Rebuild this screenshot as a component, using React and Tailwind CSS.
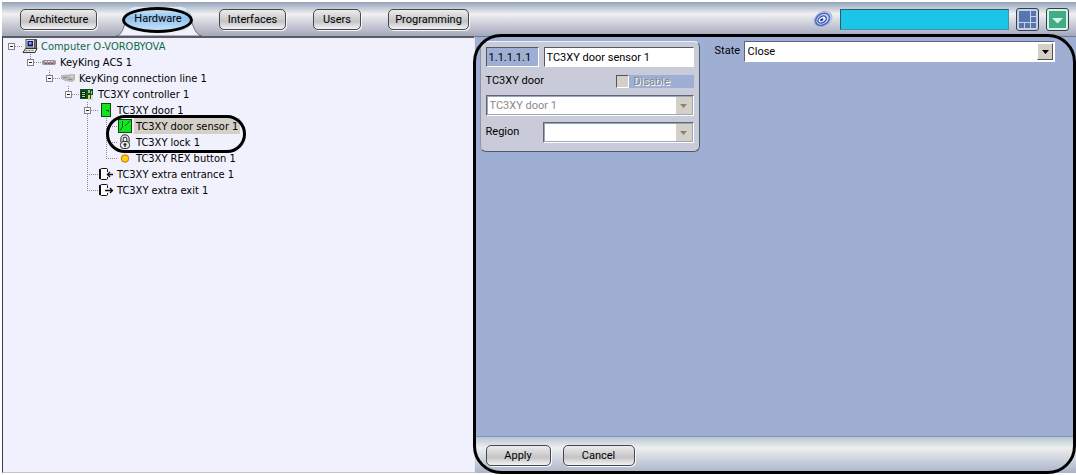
import { useState } from 'react'

const TABS = [
  { name: 'Architecture', width: 'w-[77px]' },
  { name: 'Hardware', width: 'w-[68px]' },
  { name: 'Interfaces', width: 'w-[67px]' },
  { name: 'Users', width: 'w-[48px]' },
  { name: 'Programming', width: 'w-[81px]' },
]

// branch: one character per indent cell
// r = root box, b = box with line above, B = box with lines above and below,
// v = vertical, t = tee, l = last child
const TREE = [
  { branch: 'r', icon: 'computer', label: 'Computer O-VOROBYOVA' },
  { branch: ' b', icon: 'acs', label: 'KeyKing ACS 1' },
  { branch: '  b', icon: 'line', label: 'KeyKing connection line 1' },
  { branch: '   b', icon: 'controller', label: 'TC3XY controller 1' },
  { branch: '    B', icon: 'door', label: 'TC3XY door 1' },
  { branch: '    vt', icon: 'sensor', label: 'TC3XY door sensor 1' },
  { branch: '    vt', icon: 'lock', label: 'TC3XY lock 1' },
  { branch: '    vl', icon: 'rex', label: 'TC3XY REX button 1' },
  { branch: '    t', icon: 'entrance', label: 'TC3XY extra entrance 1' },
  { branch: '    l', icon: 'exit', label: 'TC3XY extra exit 1' },
]

function Branch({ kind }) {
  const box = 'rbB'.includes(kind)
  const up = 'bBvtl'.includes(kind)
  const down = 'Bvt'.includes(kind)
  return (
    <svg width="19" height="16" className="shrink-0" shapeRendering="crispEdges" aria-hidden="true">
      {kind !== ' ' && (
        <g stroke="#8a8a92" strokeDasharray="1 1" fill="none">
          {up && <path d="M8.5 0V8" />}
          {down && <path d="M8.5 8V16" />}
          {kind !== 'v' && <path d="M8 8.5H19" />}
        </g>
      )}
      {box && (
        <g>
          <rect x="5.5" y="5.5" width="6" height="6" fill="#f8f8fd" stroke="#848488" />
          <path d="M7 8.5H10" stroke="#222" />
        </g>
      )}
    </svg>
  )
}

function NodeIcon({ name }) {
  return (
    <svg width="16" height="16" viewBox="0 0 16 16" className="shrink-0" aria-hidden="true">
      {name === 'computer' && (
        <g>
          <path d="M12 2L14.500 1.500V10L12 11Z" fill="#777" stroke="#333" />
          <rect x="4" y="1.500" width="8.500" height="8.500" fill="#d9d9cf" stroke="#555" />
          <path d="M5.500 3H11V8.500H5.500Z" fill="#14147e" />
          <path d="M7 4H9.500V6.500H7Z" fill="#8ca4ee" />
          <path d="M3.500 10.500H15L13 14.500H1Z" fill="#e4e4da" stroke="#333" />
          <path d="M3.500 12.500H12.500" stroke="#8b8b86" strokeDasharray="2 1" />
        </g>
      )}
      {name === 'acs' && (
        <g>
          <rect x="1" y="6" width="14" height="5" rx="2" fill="#97919a" />
          <path d="M4 7.500H13" stroke="#e6d9e2" strokeDasharray="2 1" />
          <path d="M4 9.500H13" stroke="#a5406f" strokeDasharray="2 1" />
        </g>
      )}
      {name === 'line' && (
        <g>
          <path d="M1 5L15 4V10L12 12L5 11L1 9Z" fill="#b9b9bb" />
          <path d="M3 7.500H7M8 9.500H12" stroke="#8d8d90" />
          <path d="M11 6.500H13" stroke="#eee" />
        </g>
      )}
      {name === 'controller' && (
        <g shapeRendering="crispEdges">
          <rect x="1" y="3" width="13" height="10" fill="#17501f" />
          <path d="M2 5H7V12H2Z" fill="#0a2a10" />
          <path d="M3 6.500H6M3 8.500H6M3 10.500H6" stroke="#a9d7a2" />
          <path d="M9 4H11V7H9ZM12 5H13V8H12Z" fill="#8fd08a" />
          <path d="M9 9H11V14H9Z" fill="#e0d36b" />
          <path d="M12 9H14V15H12Z" fill="#d9e6d5" />
        </g>
      )}
      {name === 'door' && (
        <g shapeRendering="crispEdges">
          <rect x="3.500" y="1.500" width="9" height="13" fill="#0fe61c" stroke="#16421a" />
          <path d="M8 8.500H11M10.500 8V10" stroke="#14501a" />
        </g>
      )}
      {name === 'sensor' && (
        <g>
          <rect x="1.500" y="1.500" width="13" height="13" fill="#0fe61c" stroke="#16421a" />
          <path d="M5.500 3V9L3 12.500M8 8L13.500 2.500" stroke="#145a1a" fill="none" />
        </g>
      )}
      {name === 'lock' && (
        <g>
          <path d="M5 8V5a3 3 0 0 1 6 0V8" fill="none" stroke="#333" strokeWidth="3.400" />
          <path d="M5 8V5a3 3 0 0 1 6 0V8" fill="none" stroke="#ddd" strokeWidth="1.400" />
          <rect x="3.500" y="7.500" width="9" height="7" rx="3" fill="#e8e8e8" stroke="#222" />
          <path d="M8 9V13M6.500 10.500H9.500" stroke="#222" strokeWidth="1.300" />
        </g>
      )}
      {name === 'rex' && <circle cx="8" cy="8.500" r="3.700" fill="#ffd60a" stroke="#d0661a" />}
      {(name === 'entrance' || name === 'exit') && (
        <g fill="none" stroke="#111">
          <rect x="2.500" y="2.500" width="7" height="11" rx="1" fill="#fff" />
          <path d="M2 3V13" strokeWidth="2" />
          <path d="M9.500 6V11" stroke="#f1f1fd" strokeWidth="2" />
          {name === 'entrance' ? (
            <path d="M15 8.500H9M12 6L9.500 8.500L12 11" strokeWidth="1.300" />
          ) : (
            <path d="M7 8.500H14M12 6L14.500 8.500L12 11" strokeWidth="1.300" />
          )}
        </g>
      )}
    </svg>
  )
}

function SilverButton({ className, children, ...props }) {
  return (
    <button
      type="button"
      className={`h-[21px] shrink-0 rounded-[5px] border border-[#45484f] bg-linear-to-b from-[#ececec] via-[#c4c4c6] via-60% to-[#f2f2f2] text-center leading-[19px] shadow-[1px_1px_0_#f7f7f7] ${className}`}
      {...props}
    >
      {children}
    </button>
  )
}

function Combo({ id, value, onChange, options, disabled, className = '' }) {
  return (
    <div className={`relative h-[21px] border border-t-[#5d6578] border-l-[#5d6578] border-r-white border-b-white bg-white ${className}`}>
      <select
        id={id}
        value={value}
        onChange={onChange}
        disabled={disabled}
        className={`block h-full w-full appearance-none border bg-white pr-5 pl-[2px] leading-[17px] opacity-100 outline-none ${disabled ? 'border-[#9aa8bd] text-[#8a8a8a]' : 'border-white text-black'}`}
      >
        {options.map(o => <option key={o}>{o}</option>)}
      </select>
      <span
        className={`pointer-events-none absolute top-[1px] right-[1px] bottom-[1px] flex w-4 items-center justify-center bg-[#d4d0c8] ${disabled ? '' : 'border border-t-white border-l-white border-r-[#55534f] border-b-[#55534f]'}`}
      >
        <svg width="7" height="4" viewBox="0 0 7 4" aria-hidden="true">
          <path d="M0 0H7L3.500 4Z" fill={disabled ? '#85837d' : '#000'} />
        </svg>
      </span>
    </div>
  )
}

function TopBar({ tab, onSelect }) {
  return (
    <header className="flex h-[34px] shrink-0 items-center bg-linear-to-b from-[#94a3ba] via-[#f0f0f1] via-35% to-[#a3a8bb] pr-[7px] pl-[18px]">
      <nav className="flex items-center gap-[27px] self-stretch">
        {TABS.map(t => t.name === tab ? (
          <div key={t.name} className="relative flex h-full items-center">
            <svg className="absolute -left-[8px] bottom-0" width="86" height="29" viewBox="0 0 86 29" aria-hidden="true">
              <path d="M0 29C12 27 6 1.500 22 1.500H62C78 1.500 74 27 86 29Z" fill="#f1f1fb" stroke="#6a6d76" />
            </svg>
            <button type="button" className={`relative h-[24px] rounded-full bg-linear-to-b from-[#e5f1fb] via-[#8fc0ec] via-45% to-[#c9e4fa] leading-[18px] ${t.width}`}>
              {t.name}
            </button>
            <span className="pointer-events-none absolute -left-[2px] top-[5px] h-[26px] w-[71px] rounded-[50%] border-3 border-black" />
          </div>
        ) : (
          <SilverButton key={t.name} className={t.width} onClick={() => onSelect(t.name)}>{t.name}</SilverButton>
        ))}
      </nav>
      <div className="ml-auto flex items-center">
        <svg width="20" height="20" viewBox="0 0 20 20" fill="none" aria-hidden="true">
          <g transform="rotate(-32 10 10)">
            <ellipse cx="10" cy="10" rx="9.500" ry="7" fill="#c9d3f2" stroke="#a5b2e2" />
            <ellipse cx="9.500" cy="10" rx="7.500" ry="5.500" stroke="#4a64b8" strokeWidth="1.500" />
            <ellipse cx="9" cy="10" rx="4.500" ry="3" fill="#f3f5ff" stroke="#3956b4" strokeWidth="1.400" />
            <ellipse cx="8.500" cy="10" rx="1.800" ry="1.200" fill="#1e3689" />
          </g>
        </svg>
        <div className="ml-[7px] h-[21px] w-[169px] border border-t-[#245f70] border-l-[#245f70] border-r-[#3c96a8] border-b-[#3c96a8] bg-[#1ac5e8]" />
        <button type="button" aria-label="Layout" className="ml-[7px] flex h-[23px] w-[23px] items-center justify-center rounded-[3px] border border-[#333d50] bg-[#c3d2e6]">
          <svg width="17" height="17" viewBox="0 0 17 17" fill="#5876ad" aria-hidden="true">
            <path d="M0 0H11V11H0ZM12 0H17V5H12ZM12 6H17V11H12ZM0 12H5V17H0ZM6 12H11V17H6ZM12 12H17V17H12Z" />
          </svg>
        </button>
        <button type="button" aria-label="Menu" className="ml-[7px] flex h-[23px] w-[23px] items-center justify-center rounded-[3px] border border-[#333d50] bg-[#d8f0ea]">
          <svg width="17" height="17" viewBox="0 0 17 17" aria-hidden="true">
            <path d="M0 0H17V17H0Z" fill="#40ad85" />
            <path d="M3 7H14L8.500 12.500Z" fill="#d5f3e8" />
          </svg>
        </button>
      </div>
    </header>
  )
}

function ObjectTree({ selected, onSelect }) {
  return (
    <aside className="relative border-t-2 border-r border-b border-l border-t-[#5b5c63] border-r-[#e9e9ee] border-b-[#c5c5c8] border-l-[#3c3c46] bg-[#f1f1fd]">
      <ul className="font-['DejaVu_Sans_Condensed','DejaVu_Sans',sans-serif] text-[11px]">
        {TREE.map((node, i) => (
          <li key={node.label} className="flex h-4">
            {[...node.branch].map((kind, n) => <Branch key={n} kind={kind} />)}
            <NodeIcon name={node.icon} />
            <button
              type="button"
              onClick={() => onSelect(i)}
              className={`ml-px px-[2px] pt-px leading-[15px] whitespace-nowrap ${selected === i ? 'bg-[#d4d0c8]' : ''} ${i === 0 ? 'text-[#0e6a46]' : 'text-black'}`}
            >
              {node.label}
            </button>
          </li>
        ))}
      </ul>
      <span className="pointer-events-none absolute top-[77px] left-[103px] h-[38px] w-[140px] rounded-full border-3 border-black" />
    </aside>
  )
}

export default function App() {
  const [tab, setTab] = useState('Hardware')
  const [selected, setSelected] = useState(5)
  const [name, setName] = useState('TC3XY door sensor 1')
  const [state, setState] = useState('Close')

  return (
    <div className="flex min-h-screen flex-col bg-white pt-[2px] pb-[2px] pl-[2px] font-['Roboto','Liberation_Sans',sans-serif] text-[11px] text-black">
      <TopBar tab={tab} onSelect={setTab} />

      <div className="grid flex-1 grid-cols-[44%_1fr]">
        <ObjectTree selected={selected} onSelect={setSelected} />

        <main className="relative flex flex-col border-t border-[#6d7894] bg-[#9eafd3]">
          <form className="flex flex-1 items-start gap-[15px] pt-1 pr-[21px] pl-[5px]" onSubmit={e => e.preventDefault()}>
            <fieldset className="flex w-[220px] shrink-0 flex-col gap-[6px] rounded-[6px] border border-t-[#eef0f7] border-l-[#8f95a6] border-r-[#50586c] border-b-[#50586c] bg-[#cacbd9] px-[5px] pt-[5px] pb-2">
              <div className="flex gap-[5px]">
                <input
                  aria-label="Object number"
                  value="1.1.1.1.1"
                  readOnly
                  className="h-5 w-[53px] border border-t-[#50586a] border-l-[#50586a] border-r-white border-b-white bg-[#9eafd3] px-[2px] outline-none"
                />
                <input
                  aria-label="Object name"
                  value={name}
                  onChange={e => setName(e.target.value)}
                  className="h-5 min-w-0 flex-1 border border-t-[#50586a] border-l-[#50586a] border-r-white border-b-white bg-white px-[2px] outline-none"
                />
              </div>
              <div className="flex h-4 items-center">
                <label htmlFor="parent" className="flex-1 pt-px">TC3XY door</label>
                <input
                  id="disable"
                  type="checkbox"
                  disabled
                  className="h-[13px] w-[13px] appearance-none border border-t-[#555] border-l-[#555] border-r-white border-b-white bg-[#d4d0c8]"
                />
                <label htmlFor="disable" className="h-[13px] w-[65px] bg-[#9eafd3] pl-[5px] leading-[14px] text-[#858992] [text-shadow:1px_1px_0_#fff]">
                  Disable
                </label>
              </div>
              <Combo id="parent" value="TC3XY door 1" options={['TC3XY door 1']} disabled />
              <div className="flex items-center">
                <label htmlFor="region" className="w-[57px]">Region</label>
                <Combo id="region" value="" options={['']} disabled className="flex-1" />
              </div>
            </fieldset>

            <div className="flex flex-1">
              <label htmlFor="state" className="w-[29px] leading-5">State</label>
              <Combo id="state" value={state} onChange={e => setState(e.target.value)} options={['Close', 'Open']} className="flex-1" />
            </div>
          </form>

          <footer className="flex h-[37px] shrink-0 items-center gap-3 border-t border-[#8095b4] bg-linear-to-b from-[#b6c6d4] from-0% via-[#efefef] via-30% to-[#a9b3c8] pl-[11px]">
            <SilverButton className="w-[65px]">Apply</SilverButton>
            <SilverButton className="w-[72px]">Cancel</SilverButton>
          </footer>

          <span className="pointer-events-none absolute -top-[3px] right-0 -bottom-[1px] -left-[2px] rounded-[28px] border-3 border-black" />
        </main>
      </div>
    </div>
  )
}
